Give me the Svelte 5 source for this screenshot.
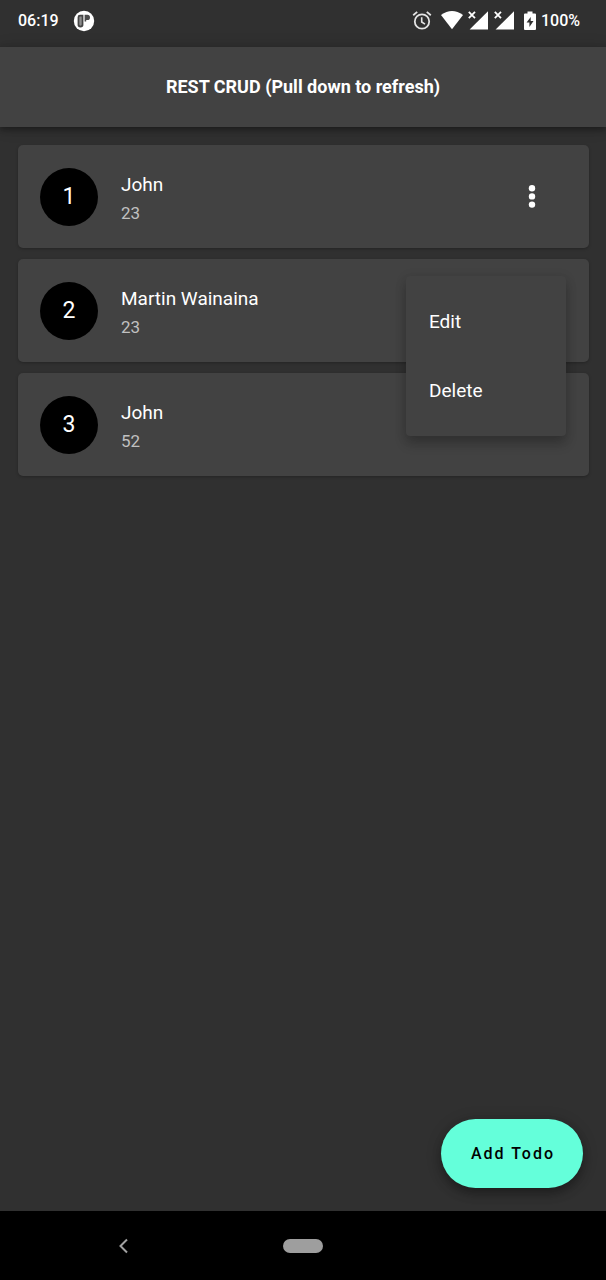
<script>
  const todos = [
    { id: 1, name: 'John', age: 23 },
    { id: 2, name: 'Martin Wainaina', age: 23 },
    { id: 3, name: 'John', age: 52 }
  ];
  let openId = $state(1);
  const toggle = (id) => (openId = openId === id ? 0 : id);
</script>

<div class="screen">
  <div class="status">
    <span>06:19</span>
    <svg class="app-icon" width="22" height="22" viewBox="0 0 22 22" aria-hidden="true">
      <circle cx="11" cy="11" r="10.2" fill="#fff" />
      <path d="M4.600 7.200q0-2.400 2.400-2.400h3.400v10.200q0 2.400-2.900 2.400t-2.900-2.400Z" fill="#444" />
      <path d="M6.300 7.300q0-.900.900-.900h1.500v8.200q0 1.100-1.200 1.100t-1.200-1.100Z" fill="#8c8c8c" />
      <path d="M11.600 4.800h2.800a2.600 2.600 0 0 1 0 5.200h-1.200v1.400h-1.600Z" fill="#4c4c4c" />
    </svg>
    <div class="signals">
      <svg width="20" height="20" viewBox="0 0 20 20" fill="none" stroke="#e4e4e4" aria-hidden="true">
        <circle cx="10" cy="10.500" r="7.2" stroke-width="1.8" />
        <path d="M9.7 6.300v4.7l3.3 2.2" stroke-width="1.6" />
        <path d="M1.2 4.300l4-3.4M18.8 4.300l-4-3.4" stroke-width="1.8" />
      </svg>
      <svg class="wide-gap" width="22" height="20" viewBox="0 0 22 20" aria-hidden="true">
        <path d="M0 4Q11-4 22 4L11 18.2Z" fill="#fff" />
      </svg>
      {#each [1, 2] as sim (sim)}
        <svg width="21" height="20" viewBox="0 0 21 20" aria-hidden="true">
          <path d="M20 .2V18.500H1.6Z" fill="#fff" />
          <path d="M0 0H9V8L5 10H0Z" fill="#303030" />
          <path d="M.8.900l6.200 6.200M7 .900L.8 7.100" stroke="#fff" stroke-width="1.8" />
        </svg>
      {/each}
      <svg class="wide-gap" width="12" height="20" viewBox="0 0 12 20" aria-hidden="true">
        <path d="M3.5.500h5v2H11q1 0 1 1v14.600q0 1-1 1H1q-1 0-1-1V3.500q0-1 1-1h2.500Z" fill="#fff" />
        <path d="M6.700 5.900L2.600 11.500H5.400V16L9.500 10.100H6.700Z" fill="#303030" />
      </svg>
      <span>100%</span>
    </div>
  </div>

  <header><h1>REST CRUD (Pull down to refresh)</h1></header>

  <main>
    <ul class="list">
      {#each todos as todo (todo.id)}
        <li class="card">
          <span class="avatar">{todo.id}</span>
          <div class="info">
            <span class="name">{todo.name}</span>
            <span class="age">{todo.age}</span>
          </div>
          <div class="actions">
            <button class="more" aria-label="More actions" aria-expanded={openId === todo.id} onclick={() => toggle(todo.id)}>
              <svg width="8" height="24" viewBox="0 0 8 24" fill="#fff" aria-hidden="true">
                <circle cx="4" cy="3.200" r="3.200" />
                <circle cx="4" cy="11.400" r="3.200" />
                <circle cx="4" cy="19.600" r="3.200" />
              </svg>
            </button>
            {#if openId === todo.id}
              <div class="menu">
                <button>Edit</button>
                <button>Delete</button>
              </div>
            {/if}
          </div>
        </li>
      {/each}
    </ul>
    <button class="fab">Add Todo</button>
  </main>

  <nav>
    <button aria-label="Back">
      <svg width="18" height="16" viewBox="0 0 18 16" aria-hidden="true">
        <path d="M15 1.500L8.500 8L15 14.500" fill="none" stroke="#a0a0a0" stroke-width="2" />
      </svg>
    </button>
    <button aria-label="Home"><span class="pill"></span></button>
  </nav>
</div>

<style>
  :global(body) {
    margin: 0;
    background: #303030;
  }
  .screen {
    min-height: 100vh;
    display: flex;
    flex-direction: column;
    background: #303030;
    color: #fff;
    font-family: Roboto, sans-serif;
  }
  button {
    border: 0;
    padding: 0;
    background: none;
    color: inherit;
    font-family: inherit;
    cursor: pointer;
  }
  svg {
    display: block;
  }
  .status {
    box-sizing: border-box;
    height: 47px;
    padding: 0 26px 5px 18px;
    display: flex;
    align-items: center;
    font-size: 16px;
    font-weight: 500;
    line-height: 20px;
  }
  .app-icon {
    margin-left: 14px;
  }
  .signals {
    margin-left: auto;
    display: flex;
    align-items: center;
    gap: 5px;
  }
  .wide-gap {
    margin-left: 4px;
  }
  header {
    position: relative;
    height: 80px;
    display: flex;
    align-items: center;
    justify-content: center;
    background: #424242;
    box-shadow: 0 3px 6px rgba(0, 0, 0, 0.3), 0 1px 14px rgba(0, 0, 0, 0.2);
  }
  h1 {
    margin: 0;
    font-size: 18px;
    font-weight: 700;
    line-height: 24px;
  }
  main {
    position: relative;
    flex: 1;
  }
  .list {
    margin: 0;
    padding: 18px 17px 18px 18px;
    display: flex;
    flex-direction: column;
    gap: 11px;
    list-style: none;
  }
  .card {
    box-sizing: border-box;
    height: 103px;
    padding: 0 23px 0 22px;
    display: flex;
    align-items: center;
    gap: 23px;
    border-radius: 5px;
    background: #424242;
    box-shadow: 0 1px 3px rgba(0, 0, 0, 0.25);
  }
  .avatar {
    width: 58px;
    height: 58px;
    display: grid;
    place-items: center;
    border-radius: 50%;
    background: #000;
    font-size: 23px;
  }
  .info {
    flex: 1;
    padding-top: 4px;
    display: flex;
    flex-direction: column;
    line-height: 28px;
  }
  .name {
    font-size: 19px;
  }
  .age {
    font-size: 17px;
    color: #c0c0c0;
  }
  .actions {
    position: relative;
  }
  .more {
    width: 69px;
    height: 69px;
    display: grid;
    place-items: center;
  }
  .menu {
    position: absolute;
    z-index: 2;
    top: 114px;
    right: 0;
    width: 160px;
    padding: 11px 0;
    display: flex;
    flex-direction: column;
    border-radius: 4px;
    background: #424242;
    box-shadow: 0 8px 12px rgba(0, 0, 0, 0.2), 0 2px 12px rgba(0, 0, 0, 0.12);
  }
  .menu button {
    height: 69px;
    padding: 0 23px;
    font-size: 19px;
    text-align: left;
  }
  .fab {
    position: absolute;
    right: 23px;
    bottom: 23px;
    height: 69px;
    padding: 0 28px 0 30px;
    border-radius: 35px;
    background: #64ffda;
    color: #000;
    font-size: 16px;
    font-weight: 500;
    letter-spacing: 2px;
    box-shadow: 0 6px 10px rgba(0, 0, 0, 0.25), 0 2px 16px rgba(0, 0, 0, 0.2);
  }
  nav {
    position: relative;
    height: 69px;
    display: grid;
    grid-template-columns: 2fr 1fr 2fr;
    background: #000;
  }
  nav button {
    display: grid;
    place-items: center;
  }
  .pill {
    width: 40px;
    height: 14px;
    border-radius: 7px;
    background: #9e9e9e;
  }
</style>
